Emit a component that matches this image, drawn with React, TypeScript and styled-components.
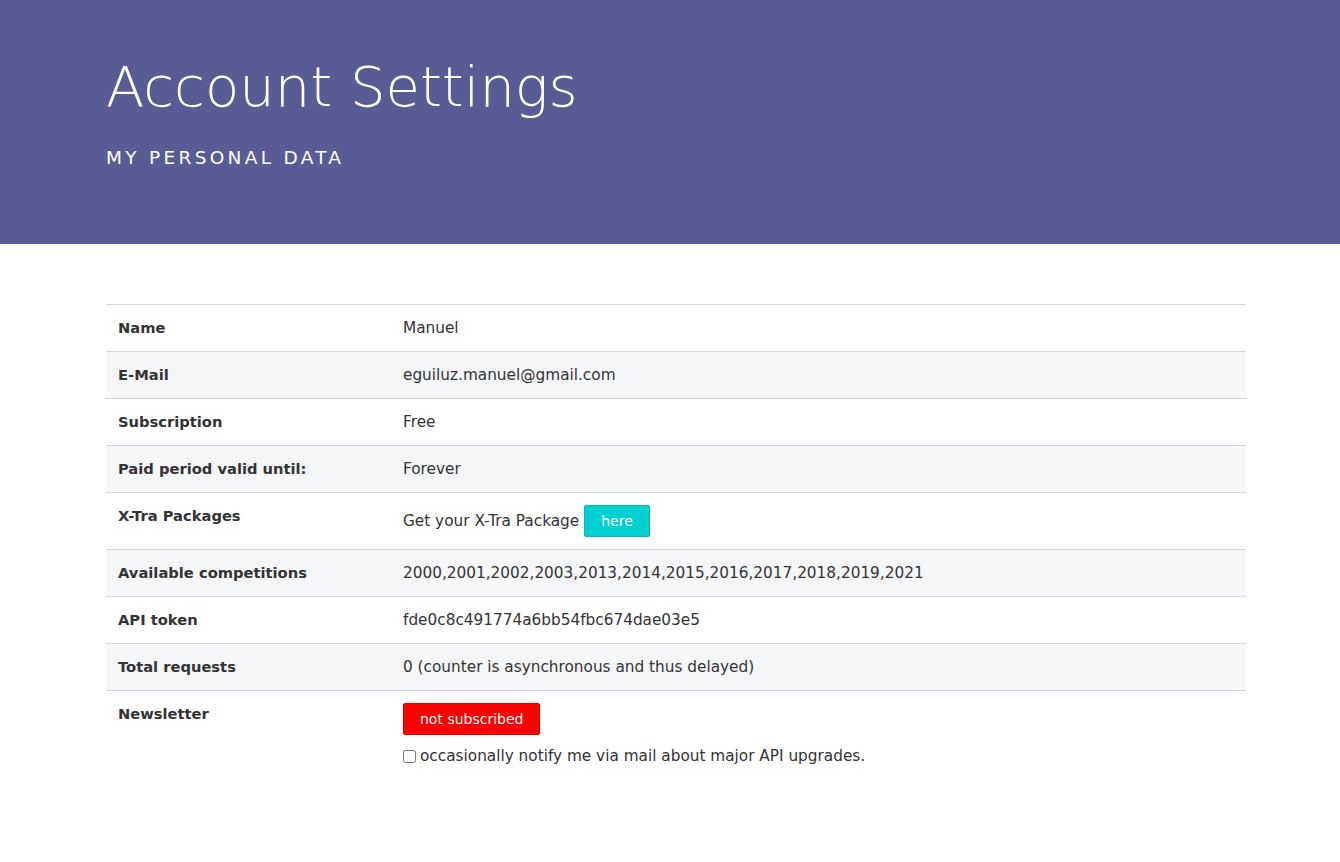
import React from "react";
import styled, { createGlobalStyle } from "styled-components";

const Global = createGlobalStyle`
  html, body { margin: 0; padding: 0; background: #fff; }
  body { font-family: "DejaVu Sans", "Noto Sans", sans-serif; color: #333; }
  * { box-sizing: border-box; }
`;

const Header = styled.header`
  background: #5a5b94;
  height: 244px;
  padding: 52px 0 0 106px;
  color: #fff;
`;

const Title = styled.h1`
  margin: 0;
  font-family: "DejaVu Sans", sans-serif;
  font-weight: 300;
  font-size: 56px;
  line-height: 70px;
`;

const Subtitle = styled.div`
  margin-top: 24px;
  font-family: "DejaVu Sans", sans-serif;
  font-size: 18.5px;
  letter-spacing: 3.3px;
  line-height: 24px;
`;

const Main = styled.main`
  padding: 60px 0 60px 106px;
`;

const Table = styled.table`
  width: 1140px;
  border-collapse: collapse;
  font-family: "DejaVu Sans", sans-serif;
`;

const Row = styled.tr<{ $striped?: boolean }>`
  background: ${(p) => (p.$striped ? "#f5f6f8" : "#fff")};
`;

const Label = styled.th`
  width: 285px;
  text-align: left;
  vertical-align: top;
  padding: 12px;
  line-height: 22px;
  font-size: 14.7px;
  font-weight: 700;
  color: #333;
  border-top: 1px solid #d1d3de;
`;

const Value = styled.td`
  text-align: left;
  vertical-align: top;
  padding: 12px;
  line-height: 22px;
  font-size: 15.3px;
  color: #333;
  border-top: 1px solid #d1d3de;
`;

const Button = styled.button<{ $variant: "cyan" | "red" }>`
  font-family: inherit;
  font-size: 14px;
  height: 32px;
  padding: 0 16px;
  border-radius: 2px;
  color: #fff;
  cursor: pointer;
  background: ${(p) => (p.$variant === "cyan" ? "#00d0d0" : "#ff0000")};
  border: 1px solid ${(p) => (p.$variant === "cyan" ? "#00b8b8" : "#e80000")};
`;

const InlineRow = styled.div`
  display: flex;
  align-items: center;
  gap: 5px;
`;

const CheckLine = styled.label`
  display: flex;
  align-items: center;
  gap: 4px;
  margin-top: 10px;
  input { margin: 0; width: 13px; height: 13px; }
`;

const rows: { label: string; value: React.ReactNode }[] = [
  { label: "Name", value: "Manuel" },
  { label: "E-Mail", value: "eguiluz.manuel@gmail.com" },
  { label: "Subscription", value: "Free" },
  { label: "Paid period valid until:", value: "Forever" },
  {
    label: "X-Tra Packages",
    value: (
      <InlineRow>
        <span>Get your X-Tra Package</span>
        <Button $variant="cyan">here</Button>
      </InlineRow>
    ),
  },
  {
    label: "Available competitions",
    value: "2000,2001,2002,2003,2013,2014,2015,2016,2017,2018,2019,2021",
  },
  { label: "API token", value: "fde0c8c491774a6bb54fbc674dae03e5" },
  { label: "Total requests", value: "0 (counter is asynchronous and thus delayed)" },
  {
    label: "Newsletter",
    value: (
      <div>
        <Button $variant="red">not subscribed</Button>
        <CheckLine>
          <input type="checkbox" />
          <span>occasionally notify me via mail about major API upgrades.</span>
        </CheckLine>
      </div>
    ),
  },
];

export default function App() {
  return (
    <>
      <Global />
      <Header>
        <Title>Account Settings</Title>
        <Subtitle>MY PERSONAL DATA</Subtitle>
      </Header>
      <Main>
        <Table>
          <tbody>
            {rows.map((r, i) => (
              <Row key={r.label} $striped={i % 2 === 1}>
                <Label>{r.label}</Label>
                <Value>{r.value}</Value>
              </Row>
            ))}
          </tbody>
        </Table>
      </Main>
    </>
  );
}
